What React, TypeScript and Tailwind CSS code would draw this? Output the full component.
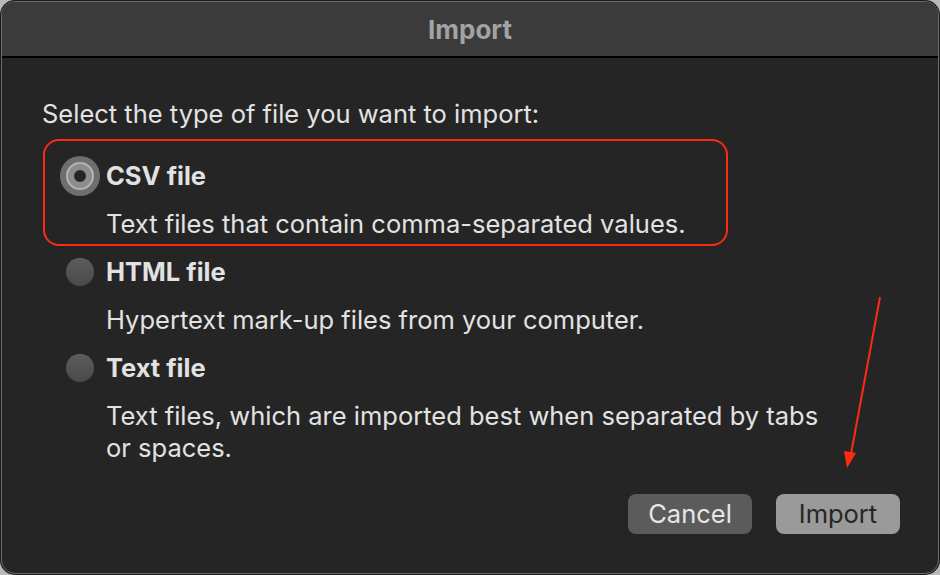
import React from 'react';

type Option = {
   id: string;
   title: string;
   lines: string[];
};

const options: Option[] = [
   {
      id: 'csv',
      title: 'CSV file',
      lines: ['Text files that contain comma-separated values.'],
   },
   {
      id: 'html',
      title: 'HTML file',
      lines: ['Hypertext mark-up files from your computer.'],
   },
   {
      id: 'text',
      title: 'Text file',
      lines: [
         'Text files, which are imported best when separated by tabs',
         'or spaces.',
      ],
   },
];

const Radio = ({ checked }: { checked: boolean }) => {
   if (checked) {
      // focus halo drawn as a ring so it doesn't grow the row
      return (
         <div className="flex h-[28px] w-[28px] shrink-0 items-center justify-center rounded-full border-2 border-[#b4b4b4] bg-[#8c8c8c] shadow-[0_0_0_6px_#6e6e6e]">
            <div className="h-[12px] w-[12px] rounded-full bg-[#262626]" />
         </div>
      );
   }
   return (
      <div className="h-[28px] w-[28px] shrink-0 rounded-full bg-gradient-to-b from-[#5c5c5c] to-[#4a4a4a] shadow-[inset_0_1px_0_rgba(255,255,255,0.08)]" />
   );
};

const App = () => {
   const selected = 'csv';

   return (
      <div
         className="h-[575px] w-[940px] bg-[#b9b9b9] p-px"
         style={{ fontFamily: 'Inter, "Noto Sans", sans-serif' }}
      >
         <div className="flex h-[573px] w-[938px] flex-col overflow-hidden rounded-[14px] border border-[#6a6a6a] bg-[#252525] shadow-[0_0_0_1px_#1a1a1a]">
            {/* Title bar */}
            <div className="flex h-[56px] shrink-0 items-center justify-center border-b-2 border-black bg-[#3b3b3b]">
               <span className="text-[26px] font-bold text-[#a3a3a3]">
                  Import
               </span>
            </div>

            {/* Content */}
            <div className="relative flex flex-1 flex-col pl-[40px] pt-[40px] text-[25.5px] leading-[32px] text-[#e2e2e2]">
               <p>Select the type of file you want to import:</p>

               <div className="ml-[24px] mt-[30px] flex flex-col gap-4">
                  {options.map((opt) => (
                     <div key={opt.id} className="relative flex flex-col gap-4">
                        {opt.id === selected && (
                           <div className="pointer-events-none absolute -left-[23px] -top-[21px] h-[107px] w-[685px] rounded-[16px] border-2 border-[#ff2a12]" />
                        )}
                        <label className="flex items-center gap-3">
                           <Radio checked={opt.id === selected} />
                           <span className="font-bold">{opt.title}</span>
                        </label>
                        <div className="pl-10">
                           {opt.lines.map((line) => (
                              <p key={line}>{line}</p>
                           ))}
                        </div>
                     </div>
                  ))}
               </div>

               {/* Annotation arrow */}
               <svg
                  className="pointer-events-none absolute left-[830px] top-[236px] h-[180px] w-[60px]"
                  viewBox="0 0 60 180"
                  fill="none"
               >
                  <path d="M48 3 L19 160" stroke="#ff2a12" strokeWidth="2" />
                  <path d="M15 174 L12 157 L24 159 Z" fill="#ff2a12" />
               </svg>

               <div className="mt-auto mb-[39px] mr-[38px] flex justify-end gap-6">
                  <button className="h-[40px] w-[124px] rounded-[8px] bg-[#5b5b5b] text-[25.5px] text-[#e6e6e6]">
                     Cancel
                  </button>
                  <button className="h-[40px] w-[124px] rounded-[8px] bg-[#9a9a9a] text-[25.5px] text-[#262626]">
                     Import
                  </button>
               </div>
            </div>
         </div>
      </div>
   );
};

export default App;
